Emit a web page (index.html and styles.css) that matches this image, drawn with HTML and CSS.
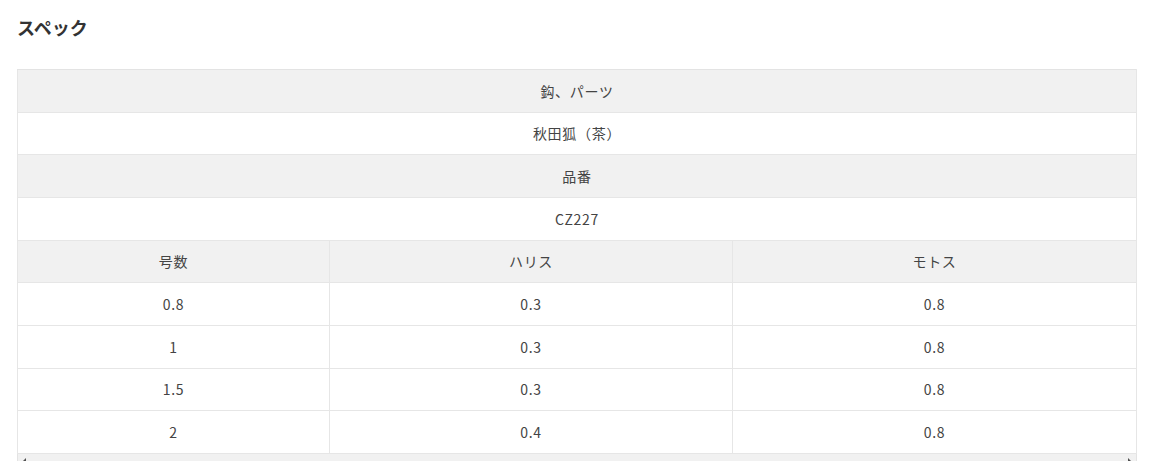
FILE: index.html
```html
<!DOCTYPE html>
<html lang="ja">
<head>
<meta charset="utf-8">
<link rel="stylesheet" href="styles.css">
</head>
<body>
<section class="spec">
  <h2 class="spec-title">スペック</h2>
  <div class="table-wrap">
    <table class="spec-table">
      <colgroup>
        <col class="c1"><col class="c2"><col class="c3">
      </colgroup>
      <tr class="head"><td colspan="3">鈎、パーツ</td></tr>
      <tr><td colspan="3">秋田狐（茶）</td></tr>
      <tr class="head"><td colspan="3">品番</td></tr>
      <tr><td colspan="3">CZ227</td></tr>
      <tr class="head"><td>号数</td><td>ハリス</td><td>モトス</td></tr>
      <tr><td>0.8</td><td>0.3</td><td>0.8</td></tr>
      <tr><td>1</td><td>0.3</td><td>0.8</td></tr>
      <tr><td>1.5</td><td>0.3</td><td>0.8</td></tr>
      <tr><td>2</td><td>0.4</td><td>0.8</td></tr>
    </table>
    <div class="scrollbar">
      <span class="arrow left"></span>
      <span class="arrow right"></span>
    </div>
  </div>
</section>
</body>
</html>
```

FILE: styles.css
```css
html, body {
  margin: 0;
  padding: 0;
  background: #fff;
}
body {
  font-family: "Noto Sans CJK JP", "Noto Sans", sans-serif;
  color: #333;
}
.spec {
  padding: 0 16px 0 17px;
}
.spec-title {
  margin: 0;
  padding-top: 14px;
  height: 27px;
  font-size: 18px;
  line-height: 27px;
  font-weight: 700;
  color: #333;
}
.table-wrap {
  margin-top: 28px;
  width: 1120px;
}
.spec-table {
  width: 1120px;
  border-collapse: collapse;
  table-layout: fixed;
  border-left: 1px solid #e3e3e3;
  border-right: 1px solid #e3e3e3;
}
.c1 { width: 312px; }
.c2 { width: 403px; }
.c3 { width: 404px; }
.spec-table td {
  border: 1px solid #e6e6e6;
  height: 41.67px;
  padding: 0;
  text-align: center;
  vertical-align: middle;
  font-size: 14px;
  line-height: 20px;
  letter-spacing: 0.05em;
  color: #444;
  background: #fff;
}
.spec-table tr.head td {
  background: #f1f1f1;
}
.spec-table tr:first-child td {
  border-top-color: #e3e3e3;
}
.scrollbar {
  position: relative;
  height: 15px;
  background: #f1f1f1;
  border-left: 1px solid #e3e3e3;
  border-right: 1px solid #e3e3e3;
}
.arrow {
  position: absolute;
  top: 4px;
  width: 0;
  height: 0;
  border-top: 4px solid transparent;
  border-bottom: 4px solid transparent;
}
.arrow.left {
  left: 4px;
  border-right: 4px solid #505050;
}
.arrow.right {
  right: 4px;
  border-left: 4px solid #505050;
}
```
